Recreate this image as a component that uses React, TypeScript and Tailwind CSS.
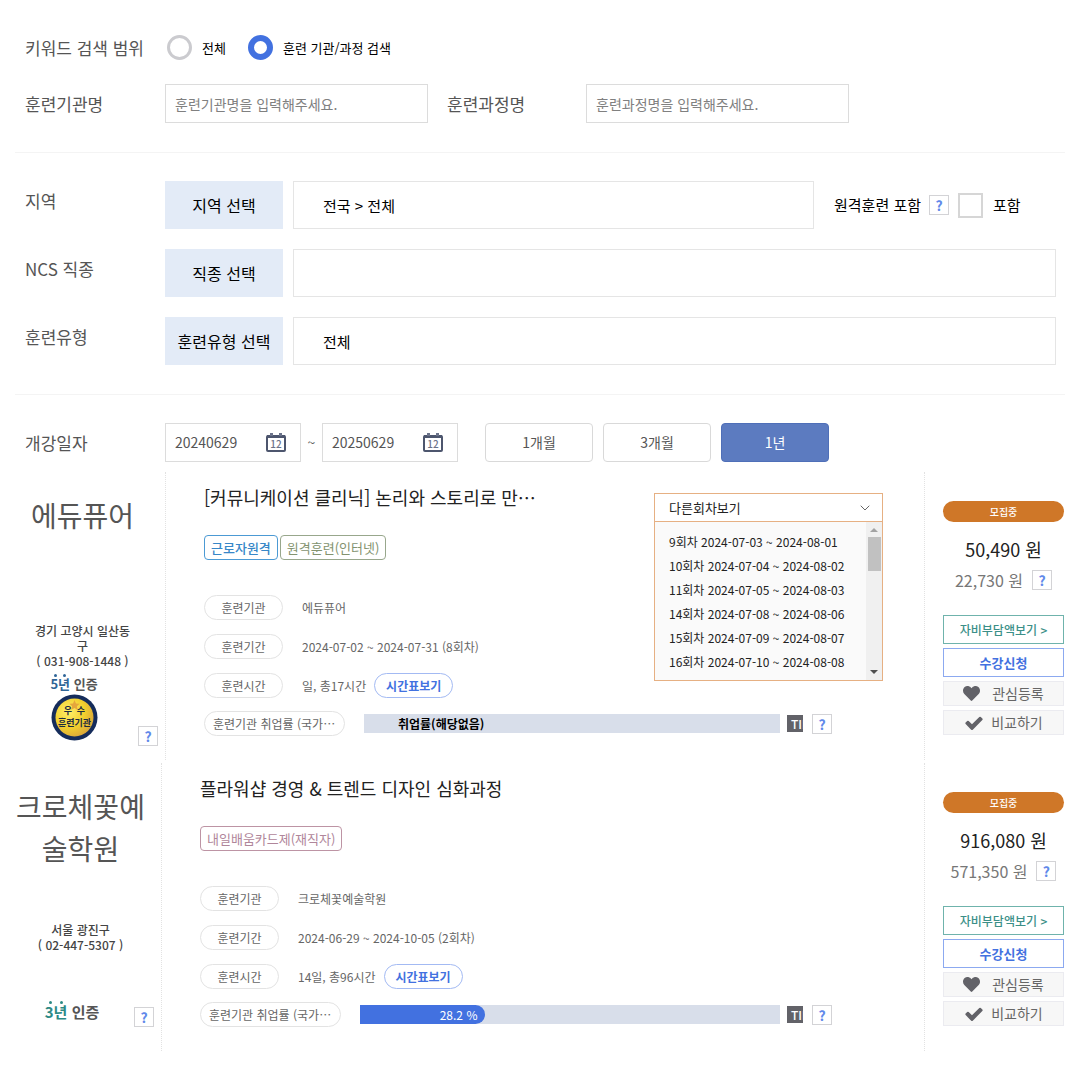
import type { ReactNode } from "react";
import { FaHeart } from "react-icons/fa";
import { ChevronDown } from "lucide-react";

interface Course {
  id: string;
  institute: string;
  address: string;
  phone: string;
  years: number;
  excellent: boolean;
  // The second card has a slightly narrower institute column.
  asideClass: string;
  certClass: string;
  certTextClass: string;
  title: string;
  tags: { label: string; className: string }[];
  period: string;
  hours: string;
  rate: number | null;
  price: string;
  selfPay: string;
  sessions?: string[];
}

const courses: Course[] = [
  {
    id: "edupure",
    institute: "에듀퓨어",
    address: "경기 고양시 일산동구",
    phone: "( 031-908-1448 )",
    years: 5,
    excellent: true,
    asideClass: "w-[166px]",
    certClass: "h-[74px]",
    certTextClass: "text-[13px] text-[#2f6597]",
    title: "[커뮤니케이션 클리닉] 논리와 스토리로 만⋯",
    tags: [
      { label: "근로자원격", className: "border-[#4c9ad4] font-medium text-[#3787c8]" },
      { label: "원격훈련(인터넷)", className: "border-[#98a78c] text-[#83936f]" },
    ],
    period: "2024-07-02 ~ 2024-07-31 (8회차)",
    hours: "일, 총17시간",
    rate: null,
    price: "50,490 원",
    selfPay: "22,730 원",
    sessions: [
      "9회차 2024-07-03 ~ 2024-08-01",
      "10회차 2024-07-04 ~ 2024-08-02",
      "11회차 2024-07-05 ~ 2024-08-03",
      "14회차 2024-07-08 ~ 2024-08-06",
      "15회차 2024-07-09 ~ 2024-08-07",
      "16회차 2024-07-10 ~ 2024-08-08",
    ],
  },
  {
    id: "croche",
    institute: "크로체꽃예술학원",
    address: "서울 광진구",
    phone: "( 02-447-5307 )",
    years: 3,
    excellent: false,
    asideClass: "w-[162px]",
    certClass: "h-[64px]",
    certTextClass: "text-[15px] text-[#2c8a86]",
    title: "플라워샵 경영 & 트렌드 디자인 심화과정",
    tags: [
      { label: "내일배움카드제(재직자)", className: "border-[#bd94a4] text-[#b0869a]" },
    ],
    period: "2024-06-29 ~ 2024-10-05 (2회차)",
    hours: "14일, 총96시간",
    rate: 28.2,
    price: "916,080 원",
    selfPay: "571,350 원",
  },
];

function HelpButton() {
  return (
    <button
      type="button"
      aria-label="도움말"
      className="flex h-5 w-5 shrink-0 items-center justify-center border border-[#d3d3d6] bg-white text-[14px] leading-none font-bold text-[#6189ea]"
    >
      ?
    </button>
  );
}

function CalendarIcon() {
  return (
    <svg width="20" height="19" viewBox="0 0 20 19" fill="none" aria-hidden="true">
      <rect x="1" y="3" width="18" height="15" rx="1" stroke="#4d566e" strokeWidth="2" />
      <path d="M1 3.5h18" stroke="#4d566e" strokeWidth="3" />
      <path d="M5.5 0v3M14.5 0v3" stroke="#6b738a" strokeWidth="3" />
      <text x="10" y="14.5" textAnchor="middle" fontSize="10" fontWeight="500" fill="#6b738a">
        12
      </text>
    </svg>
  );
}

function CheckIcon() {
  return (
    <svg width="20" height="20" viewBox="0 0 1792 1792" fill="#626268" aria-hidden="true">
      <path d="M1671 566q0 40-28 68l-724 724-136 136q-28 28-68 28t-68-28l-136-136-362-362q-28-28-28-68t28-68l136-136q28-28 68-28t68 28l294 295 656-657q28-28 68-28t68 28l136 136q28 28 28 68z" />
    </svg>
  );
}

function DateField({ label, value }: { label: string; value: string }) {
  return (
    <div className="flex h-[39px] w-[136px] items-center justify-between border border-[#dcdcdc] pr-[14px] pl-[9px]">
      <input
        type="text"
        aria-label={label}
        defaultValue={value}
        className="w-[80px] text-[14px] text-[#555] outline-none"
      />
      <button type="button" aria-label={`${label} 달력`}>
        <CalendarIcon />
      </button>
    </div>
  );
}

function PickerRow({
  label,
  button,
  value,
  children,
}: {
  label: string;
  button: string;
  value: string;
  children?: ReactNode;
}) {
  return (
    <div className="flex h-12 items-start">
      <span className="w-[140px] shrink-0 text-[17px] leading-10 text-[#555]">{label}</span>
      <button
        type="button"
        className="h-12 w-[118px] shrink-0 bg-[#e3ebf7] text-[16px] text-black"
      >
        {button}
      </button>
      <input
        type="text"
        readOnly
        aria-label={label}
        value={value}
        className="ml-[10px] h-12 min-w-0 flex-1 border border-[#e5e5e5] px-[29px] text-[15px] text-black outline-none"
      />
      {children}
    </div>
  );
}

function SearchForm() {
  return (
    <form className="mx-[15px] pt-7 text-[17px] text-[#555]">
      <div className="space-y-[17px] px-[10px] pb-[29px]">
        <div
          role="radiogroup"
          aria-labelledby="scope-label"
          className="flex h-[39px] items-center text-[13px] text-black"
        >
          <span id="scope-label" className="w-[142px] text-[17px] text-[#555]">
            키워드 검색 범위
          </span>
          <label className="mr-[22px] flex items-center gap-[10px]">
            <input
              type="radio"
              name="scope"
              className="h-[25px] w-[25px] appearance-none rounded-full border-[3px] border-[#cbcbcf] checked:border-[6px] checked:border-[#4271e0]"
            />
            전체
          </label>
          <label className="flex items-center gap-[10px]">
            <input
              type="radio"
              name="scope"
              defaultChecked
              className="h-[25px] w-[25px] appearance-none rounded-full border-[3px] border-[#cbcbcf] checked:border-[6px] checked:border-[#4271e0]"
            />
            훈련 기관/과정 검색
          </label>
        </div>
        <div className="flex items-center">
          <label htmlFor="institute" className="w-[140px]">
            훈련기관명
          </label>
          <input
            id="institute"
            type="text"
            placeholder="훈련기관명을 입력해주세요."
            className="h-[39px] w-[263px] border border-[#dcdcdc] px-[9px] text-[14px] outline-none placeholder:text-[#808080]"
          />
          <label htmlFor="course" className="ml-[19px] w-[139px]">
            훈련과정명
          </label>
          <input
            id="course"
            type="text"
            placeholder="훈련과정명을 입력해주세요."
            className="h-[39px] w-[263px] border border-[#dcdcdc] px-[9px] text-[14px] outline-none placeholder:text-[#808080]"
          />
        </div>
      </div>

      <div className="space-y-5 border-y border-[#f4f4f4] pt-7 pr-[9px] pb-[29px] pl-[10px]">
        <PickerRow label="지역" button="지역 선택" value="전국 > 전체">
          <div className="flex h-12 w-[242px] shrink-0 items-center pl-5 text-[15px] text-black">
            <span className="mr-2">원격훈련 포함</span>
            <HelpButton />
            <label className="ml-[9px] flex items-center gap-[10px]">
              <input
                type="checkbox"
                className="h-[25px] w-[25px] appearance-none border-2 border-[#d6d6d6] bg-white checked:bg-[#4271e0]"
              />
              포함
            </label>
          </div>
        </PickerRow>
        <PickerRow label="NCS 직종" button="직종 선택" value="" />
        <PickerRow label="훈련유형" button="훈련유형 선택" value="전체" />
      </div>

      <div className="flex items-center px-[10px] pt-7 pb-[10px] text-[14px]">
        <span className="w-[140px] text-[17px]">개강일자</span>
        <DateField label="시작일" value="20240629" />
        <span className="w-[21px] text-center">~</span>
        <DateField label="종료일" value="20250629" />
        <div className="ml-[27px] flex gap-[10px]">
          <button type="button" className="h-[39px] w-[108px] rounded-[4px] border border-[#d9d9d9]">
            1개월
          </button>
          <button type="button" className="h-[39px] w-[108px] rounded-[4px] border border-[#d9d9d9]">
            3개월
          </button>
          <button
            type="button"
            aria-pressed="true"
            className="h-[39px] w-[108px] rounded-[4px] border border-[#4f6fb8] bg-[#5c7bc0] text-white"
          >
            1년
          </button>
        </div>
      </div>
    </form>
  );
}

// Round blue and gold seal given to excellent training institutes.
function ExcellentSeal() {
  return (
    <svg width="47" height="47" viewBox="0 0 47 47" aria-label="우수훈련기관">
      <defs>
        <radialGradient id="gold" cx="35%" cy="35%" r="70%">
          <stop offset="0" stopColor="#fff06a" />
          <stop offset="0.6" stopColor="#f2cf2d" />
          <stop offset="1" stopColor="#dba83a" />
        </radialGradient>
      </defs>
      <circle cx="23.5" cy="23.5" r="23" fill="#152c5b" />
      <circle cx="23.5" cy="23.5" r="19" fill="url(#gold)" />
      <path
        d="M23.5 6l1.5 3.400 3.600.4-2.700 2.500.8 3.600-3.200-1.800-3.200 1.800.8-3.600-2.700-2.500 3.600-.4z"
        fill="#e5a63c"
      />
      <g fill="#1d2b3f" fontWeight="700" textAnchor="middle">
        <text x="17" y="20" fontSize="9">우</text>
        <text x="30" y="20" fontSize="9">수</text>
        <text x="23.5" y="32" fontSize="9">훈련기관</text>
      </g>
    </svg>
  );
}

function InstitutePanel({ course }: { course: Course }) {
  return (
    <div
      className={`shrink-0 border-r border-dotted border-[#e2e2e2] text-center text-[#444] ${course.asideClass}`}
    >
      <div className="h-[147px] px-3 pt-[22px] text-[28px] leading-[42px] break-all text-[#555]">
        {course.institute}
      </div>
      <div className="mx-auto flex h-[53px] w-[104px] flex-col justify-center text-[12px] leading-[15px] font-medium break-all">
        <p>{course.address}</p>
        <p>{course.phone}</p>
      </div>
      <div className={`flex items-end pr-[7px] pl-[10px] ${course.certClass}`}>
        <div className="flex flex-1 flex-col items-center pb-[5px]">
          <p className={`mb-px font-bold leading-[18px] ${course.certTextClass}`}>
            <span className="relative">
              {course.years}년
              <span className="absolute top-0 left-1 h-[3px] w-[3px] rounded-full bg-current" />
              <span className="absolute top-0 right-1 h-[3px] w-[3px] rounded-full bg-current" />
            </span>{" "}
            <span className="text-[#555]">인증</span>
          </p>
          {course.excellent && <ExcellentSeal />}
        </div>
        <HelpButton />
      </div>
    </div>
  );
}

function InfoRow({ label, children }: { label: string; children: ReactNode }) {
  return (
    <div className="flex h-[25px] items-center text-[12px]">
      <dt className="flex h-[25px] w-[79px] shrink-0 items-center justify-center rounded-full border border-[#e3e3e3] text-[#666]">
        {label}
      </dt>
      <dd className="ml-[19px] flex items-center gap-2 text-[#666]">{children}</dd>
    </div>
  );
}

function RateBar({ rate }: { rate: number | null }) {
  return (
    <div className="ml-[19px] h-[19px] flex-1 bg-[#d8deea] text-[12px] leading-[19px]">
      {rate === null ? (
        <p className="pl-[34px] font-bold text-black">취업률(해당없음)</p>
      ) : (
        <p
          className="rounded-r-full bg-[#4271e0] pr-2 text-right text-white"
          style={{ width: `calc(${rate}% + 7px)` }}
        >
          {rate} %
        </p>
      )}
    </div>
  );
}

function SessionMenu({ sessions }: { sessions: string[] }) {
  return (
    <div className="absolute top-[21px] right-[41px] w-[229px] border border-[#e6b083] text-[12px] text-[#222]">
      <button
        type="button"
        aria-expanded="true"
        className="flex h-[27px] w-full items-center justify-between bg-white pr-[9px] pl-[14px] text-[13px]"
      >
        다른회차보기
        <ChevronDown size={16} strokeWidth={1.5} className="text-[#666]" />
      </button>
      <div className="flex h-[159px] border-t border-[#e6b083] bg-[#fafafa]">
        <ul className="flex-1 overflow-hidden pt-2 pl-[14px] leading-6">
          {sessions.map((session) => (
            <li key={session}>{session}</li>
          ))}
        </ul>
        {/* Scrollbar */}
        <div className="flex w-4 flex-col items-center bg-[#f0f0f0] py-[6px]">
          <svg width="8" height="4" viewBox="0 0 8 4" fill="#a3a3a3" aria-hidden="true">
            <path d="M4 0l4 4H0z" />
          </svg>
          <div className="mt-[5px] h-[34px] w-[13px] bg-[#c1c1c1]" />
          <svg className="mt-auto" width="8" height="4" viewBox="0 0 8 4" fill="#505050" aria-hidden="true">
            <path d="M0 0h8L4 4z" />
          </svg>
        </div>
      </div>
    </div>
  );
}

function ActionPanel({ course }: { course: Course }) {
  return (
    <div className="w-[156px] shrink-0 border-l border-dotted border-[#e2e2e2] pt-[29px] pr-4 pl-[18px] text-center">
      <p className="h-[21px] rounded-full bg-[#cf7728] text-[10px] leading-[21px] font-medium text-white">
        모집중
      </p>
      <p className="mt-3 text-[18px] leading-[30px] text-[#222]">{course.price}</p>
      <div className="flex h-8 items-center justify-center gap-[9px] text-[16px] text-[#777]">
        {course.selfPay}
        <HelpButton />
      </div>
      <div className="mt-[19px] flex flex-col gap-1">
        <button
          type="button"
          className="h-[29px] border border-[#6fb3ac] text-[12px] font-medium text-[#3b8f88]"
        >
          자비부담액보기 &gt;
        </button>
        <button
          type="button"
          className="h-[29px] border border-[#8ca9f0] text-[13px] font-bold text-[#4271e0]"
        >
          수강신청
        </button>
        <button
          type="button"
          className="flex h-[25px] items-center justify-center gap-3 border border-[#ebebf0] bg-[#f7f7f7] text-[14px] text-[#666]"
        >
          <FaHeart size={17} className="text-[#626268]" />
          관심등록
        </button>
        <button
          type="button"
          className="flex h-[25px] items-center justify-center gap-[7px] border border-[#ebebf0] bg-[#f7f7f7] text-[14px] text-[#666]"
        >
          <CheckIcon />
          비교하기
        </button>
      </div>
    </div>
  );
}

function CourseCard({ course }: { course: Course }) {
  return (
    <article className="flex min-h-[288px]">
      <InstitutePanel course={course} />
      <div className="relative min-w-0 flex-1 pt-[11px] pr-[92px] pl-[38px]">
        <h2 className="text-[18px] leading-7 text-[#222]">{course.title}</h2>
        <div className="mt-6 flex gap-[2px]">
          {course.tags.map((tag) => (
            <span
              key={tag.label}
              className={`flex h-[25px] items-center rounded-[4px] border px-[6px] text-[13px] ${tag.className}`}
            >
              {tag.label}
            </span>
          ))}
        </div>
        <dl className="mt-[35px] space-y-[14px]">
          <InfoRow label="훈련기관">{course.institute}</InfoRow>
          <InfoRow label="훈련기간">{course.period}</InfoRow>
          <InfoRow label="훈련시간">
            {course.hours}
            <button
              type="button"
              className="h-[25px] w-[79px] rounded-full border border-[#a3baf3] font-bold text-[#4271e0]"
            >
              시간표보기
            </button>
          </InfoRow>
        </dl>
        <div className="mt-[13px] flex items-center">
          <span className="flex h-[25px] w-[141px] shrink-0 items-center rounded-full border border-[#e3e3e3] pl-2 text-[12px] whitespace-nowrap text-[#666]">
            훈련기관 취업률 (국가⋯
          </span>
          <RateBar rate={course.rate} />
          <span className="ml-[7px] h-[17px] w-4 overflow-hidden bg-[#626268] pl-1 text-[12px] leading-[17px] font-medium text-white">
            TIP
          </span>
          <span className="ml-[9px]">
            <HelpButton />
          </span>
        </div>
        {course.sessions && <SessionMenu sessions={course.sessions} />}
      </div>
      <ActionPanel course={course} />
    </article>
  );
}

export default function App() {
  return (
    <main className="bg-white pb-7 font-['Noto_Sans_CJK_KR',sans-serif]" lang="ko">
      <SearchForm />
      <section className="flex flex-col gap-[3px]" aria-label="훈련과정 목록">
        {courses.map((course) => (
          <CourseCard key={course.id} course={course} />
        ))}
      </section>
    </main>
  );
}
